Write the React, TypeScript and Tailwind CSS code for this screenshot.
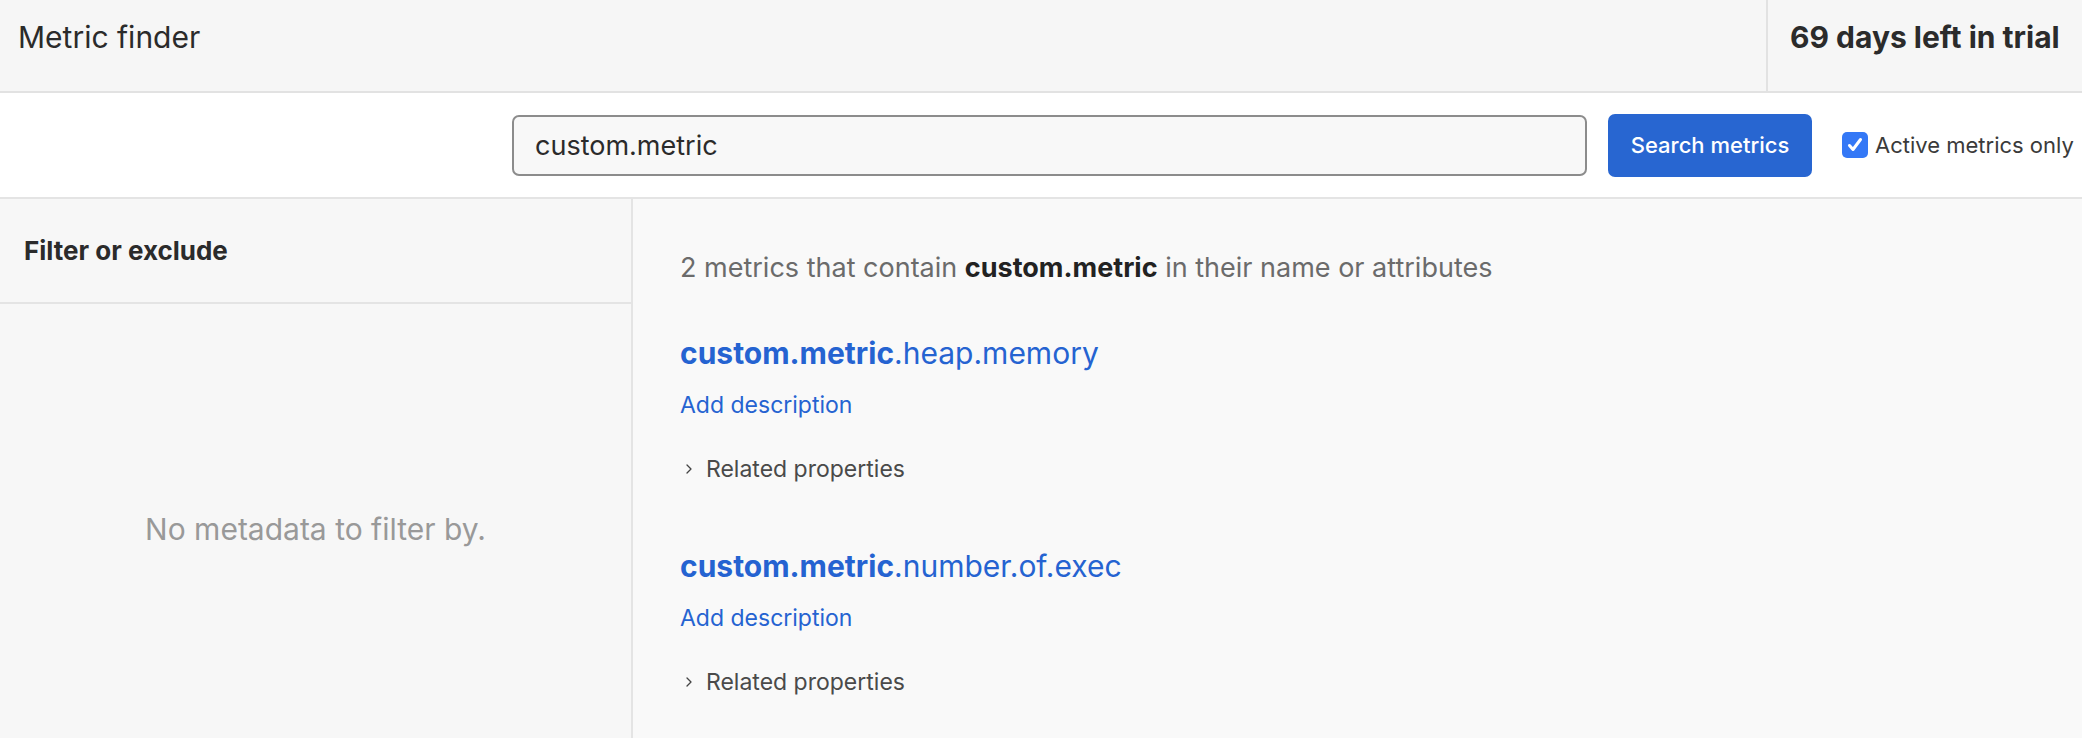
import React, { useState } from "react";

const metrics = [
  { prefix: "custom.metric", suffix: ".heap.memory" },
  { prefix: "custom.metric", suffix: ".number.of.exec" },
];

function Chevron() {
  return (
    <svg width="12" height="12" viewBox="0 0 12 12" fill="none" className="shrink-0">
      <path d="M4 2l4 4-4 4" stroke="#444" strokeWidth="1.3" strokeLinecap="round" strokeLinejoin="round" />
    </svg>
  );
}

export default function App() {
  const [query, setQuery] = useState("custom.metric");
  const [activeOnly, setActiveOnly] = useState(true);

  return (
    <div
      className="w-[2082px] h-[738px] overflow-hidden flex flex-col bg-[#f8f8f8] text-[#2a2a2a]"
      style={{ fontFamily: "Inter, 'Noto Sans', sans-serif" }}
    >
      {/* header */}
      <header className="h-[93px] shrink-0 flex bg-[#f6f6f6] border-b-2 border-[#e2e2e2]">
        <div className="flex-1 pl-[18px] pt-[19px] text-[30px] leading-[36px] text-[#2b2b2b]">
          Metric finder
        </div>
        <div className="w-[316px] pl-[22px] pt-[19px] border-l-2 border-[#e2e2e2] text-[30px] leading-[36px] font-bold text-[#2b2b2b] whitespace-nowrap">
          69 days left in trial
        </div>
      </header>

      {/* search row */}
      <div className="h-[106px] shrink-0 flex items-center pl-[512px] gap-[21px] bg-white border-b-2 border-[#e4e4e4] whitespace-nowrap">
        <input
          value={query}
          onChange={(e) => setQuery(e.target.value)}
          className="w-[1075px] h-[61px] shrink-0 rounded-[7px] border-2 border-[#8c8c8c] bg-[#f8f8f8] px-[21px] text-[27px] text-[#2b2b2b] outline-none"
        />
        <button className="w-[204px] h-[63px] shrink-0 rounded-[7px] bg-[#2866d1] text-white text-[22px] font-medium">
          Search metrics
        </button>
        <label className="flex items-center gap-[7px] ml-[9px] text-[22px] text-[#3a3a3a] shrink-0">
          <span
            onClick={() => setActiveOnly(!activeOnly)}
            className="w-[26px] h-[26px] rounded-[5px] bg-[#3478f6] flex items-center justify-center"
          >
            {activeOnly && (
              <svg width="18" height="18" viewBox="0 0 18 18" fill="none">
                <path d="M3.5 9.5l3.5 4 7.5-10" stroke="white" strokeWidth="3" strokeLinecap="round" strokeLinejoin="round" />
              </svg>
            )}
          </span>
          Active metrics only
        </label>
      </div>

      {/* body */}
      <div className="flex-1 flex min-h-0">
        <aside className="w-[633px] shrink-0 flex flex-col bg-[#f7f7f7] border-r-2 border-[#e4e4e4]">
          <div className="h-[105px] shrink-0 flex items-center pl-[24px] border-b-2 border-[#e4e4e4] text-[26px] leading-[32px] font-bold text-[#2b2b2b]">
            Filter or exclude
          </div>
          <div className="flex-1 flex justify-center pt-[207px] text-[30px] leading-[36px] text-[#999999]">
            No metadata to filter by.
          </div>
        </aside>

        <main className="flex-1 bg-[#f9f9f9] pl-[47px] pt-[53px]">
          <p className="text-[27px] text-[#6b6b6b] leading-[32px] whitespace-nowrap">
            2 metrics that contain <b className="font-bold text-[#222]">custom.metric</b> in their name or attributes
          </p>
          <div className="mt-[51px] flex flex-col gap-[65px]">
            {metrics.map((m) => (
              <div key={m.suffix} className="flex flex-col items-start">
                <div className="text-[30px] leading-[36px] text-[#2563d1]">
                  <span className="font-bold">{m.prefix}</span>
                  {m.suffix}
                </div>
                <a className="mt-[20px] text-[23px] leading-[28px] text-[#2563d1] cursor-pointer">Add description</a>
                <div className="mt-[36px] flex items-center gap-[11px] pl-[3px] text-[23px] leading-[28px] text-[#4a4a4a]">
                  <Chevron />
                  Related properties
                </div>
              </div>
            ))}
          </div>
        </main>
      </div>
    </div>
  );
}
